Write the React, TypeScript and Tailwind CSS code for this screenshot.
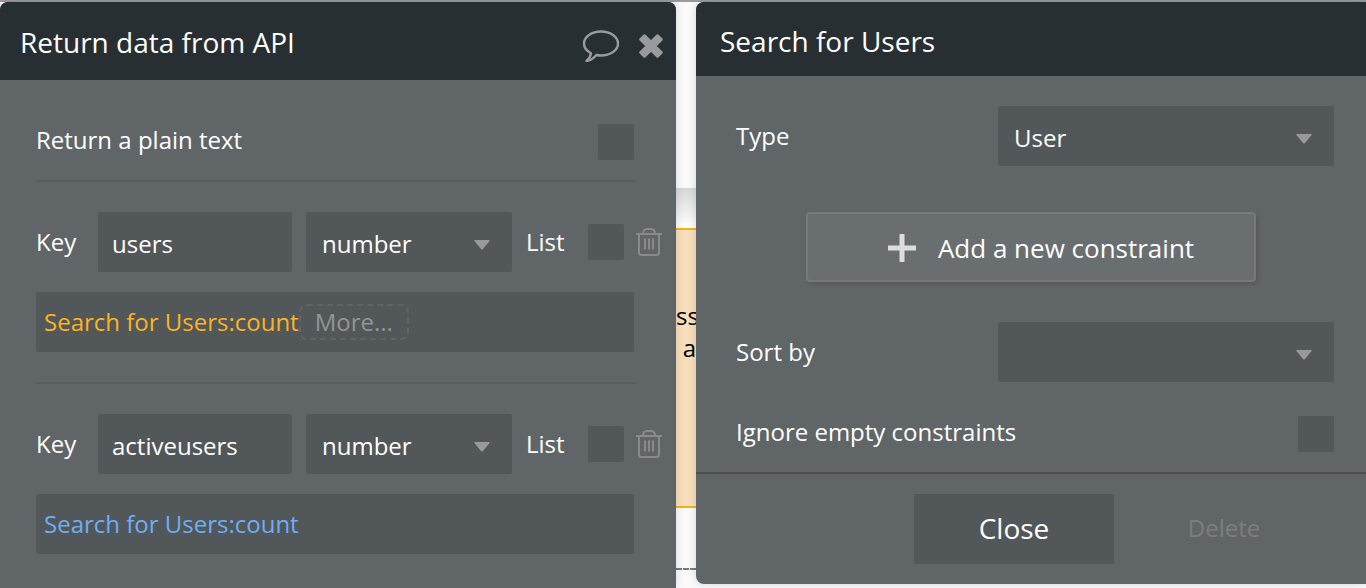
import { useState } from 'react';
import type { ReactNode } from 'react';

const entries = [
  { id: 'users', name: 'users', type: 'number', color: 'text-[#fbb321]', more: true },
  { id: 'activeusers', name: 'activeusers', type: 'number', color: 'text-[#6eaef5]', more: false },
];

function BubbleIcon() {
  return (
    <svg width="38" height="34" viewBox="0 0 38 34" fill="none" stroke="#989b9c" strokeWidth="2.4" strokeLinejoin="round">
      <path d="M19 2.500c9.400 0 17 5.300 17 12s-7.600 12-17 12c-1.600 0-3.100-.2-4.600-.5C11.500 29.500 8 31.600 4.500 32c2.400-2 4-4.600 4.500-7.800C4.800 22 2 18.500 2 14.500c0-6.700 7.600-12 17-12z" />
    </svg>
  );
}

function CrossIcon() {
  return (
    <svg width="24" height="24" viewBox="0 0 24 24" fill="#989b9c" stroke="#989b9c" strokeWidth="2.500" strokeLinejoin="round">
      <path d="M5.500 1.500l6.500 6.500 6.500-6.500 4 4-6.500 6.500 6.500 6.500-4 4-6.500-6.500-6.500 6.500-4-4L8 12 1.500 5.500z" />
    </svg>
  );
}

function TrashIcon() {
  return (
    <svg width="26" height="28" viewBox="0 0 26 28" fill="none" stroke="#878b8d" strokeWidth="2">
      <path d="M0 6h26M7 6c0-3 1.500-5 4-5h4c2.500 0 4 2 4 5M3 6v18.500c0 1.500 1 2.500 2.500 2.500h15c1.500 0 2.500-1 2.500-2.500V6" />
      <path d="M9 10.500v11M13 10.500v11M17 10.500v11" />
    </svg>
  );
}

function PlusIcon() {
  return (
    <svg width="28" height="28" viewBox="0 0 28 28" stroke="#dcdddd" strokeWidth="5">
      <path d="M14 0v28M0 14h28" />
    </svg>
  );
}

function Checkbox({ id, label }: { id: string; label?: string }) {
  return (
    <input
      id={id}
      type="checkbox"
      aria-label={label}
      className="h-9 w-9 shrink-0 appearance-none rounded-xs bg-[#525759] checked:bg-[#8a8f91]"
    />
  );
}

function Dropdown({ id, label, className, children }: { id: string; label?: string; className: string; children: ReactNode }) {
  return (
    <div className={`relative h-15 shrink-0 ${className}`}>
      <select id={id} aria-label={label} className="h-full w-full appearance-none rounded-xs bg-[#525759] pt-1 pr-12 pl-4">
        {children}
      </select>
      <svg
        className="pointer-events-none absolute top-7 right-5.5"
        width="16"
        height="10"
        viewBox="0 0 16 10"
        fill="#989b9c"
      >
        <path d="M1 0h14q1.300 0 .5 1L9 9q-1 1-2 0L.5 1Q-.3 0 1 0z" />
      </svg>
    </div>
  );
}

function ReturnDataPanel() {
  const [names, setNames] = useState<Record<string, string>>({ users: 'users', activeusers: 'activeusers' });

  return (
    <section className="z-10 rounded-t-lg bg-[#606568] shadow-[0_0_8px_rgba(0,0,0,0.15)]">
      <header className="flex items-center rounded-t-lg bg-[#282f32] pt-[19px] pr-[13px] pb-[17px] pl-5">
        <h2 className="flex-1 text-[28px] leading-[38px]">Return data from API</h2>
        <button type="button" aria-label="Comment" className="mr-[19px] pt-2">
          <BubbleIcon />
        </button>
        <button type="button" aria-label="Close panel" className="pt-2">
          <CrossIcon />
        </button>
      </header>

      <div className="pt-11 pr-10 pb-5 pl-9">
        <div className="flex justify-between pr-0.5">
          <label htmlFor="plain-text" className="leading-8">
            Return a plain text
          </label>
          <Checkbox id="plain-text" />
        </div>

        {entries.map((entry) => (
          <div key={entry.id} className="mt-5 border-t-2 border-[#585d5f] pt-[30px] pb-2.5">
            <div className="-mr-[26px] flex items-center">
              <label htmlFor={`${entry.id}-key`} className="w-[62px] shrink-0">
                Key
              </label>
              <input
                id={`${entry.id}-key`}
                type="text"
                value={names[entry.id]}
                onChange={(e) => setNames({ ...names, [entry.id]: e.target.value })}
                className="h-15 min-w-0 flex-1 rounded-xs bg-[#525759] px-3.5 pt-0.5"
              />
              <Dropdown id={`${entry.id}-type`} label="Value type" className="ml-3.5 w-[206px]">
                <option>{entry.type}</option>
                <option>text</option>
              </Dropdown>
              <label htmlFor={`${entry.id}-list`} className="ml-3.5 w-[62px] shrink-0">
                List
              </label>
              <Checkbox id={`${entry.id}-list`} />
              <button type="button" aria-label="Delete key" className="ml-3 shrink-0">
                <TrashIcon />
              </button>
            </div>

            <div className="mt-5 mr-0.5 flex h-15 items-center rounded-xs bg-[#525759] px-2">
              <button type="button" className={entry.color}>
                Search for Users:count
              </button>
              {entry.more && (
                <button
                  type="button"
                  className="rounded-lg border-2 border-dashed border-[#5f6466] px-3.5 leading-8 text-[#929596]"
                >
                  More...
                </button>
              )}
            </div>
          </div>
        ))}
      </div>
    </section>
  );
}

// Slice of the page editor that stays visible between the two panels
function Canvas() {
  return (
    <div className="overflow-hidden text-black">
      <div className="h-[186px]" />
      <div className="h-10 bg-linear-to-b from-[#d5d7d8] to-white" />
      <div className="h-[280px] border-y-2 border-[#f4b01f] bg-[#f8dfbb] pt-[70px] leading-8">
        <p>ss</p>
        <p className="text-right">a</p>
      </div>
      <div className="mt-15 border-t-2 border-dashed border-[#777b7e]" />
    </div>
  );
}

function SearchPanel() {
  return (
    <section className="z-10 self-start rounded-l-lg bg-[#606568] shadow-[0_0_8px_rgba(0,0,0,0.15)]">
      <header className="rounded-tl-lg bg-[#282f32] px-6 pt-5 pb-4">
        <h2 className="text-[28px] leading-[38px]">Search for Users</h2>
      </header>

      <div className="px-8 pt-[30px] pb-5">
        <div className="flex items-center justify-between pl-2">
          <label htmlFor="search-type">Type</label>
          <Dropdown id="search-type" className="w-[336px]">
            <option>User</option>
          </Dropdown>
        </div>

        <button
          type="button"
          className="mx-auto mt-[46px] flex h-[70px] w-[450px] items-center justify-center gap-[22px] rounded-sm border-2 border-[#75797b] bg-[#696e70] pt-0.5 pl-5 text-[26px] shadow-[2px_2px_4px_rgba(0,0,0,0.12)]"
        >
          <PlusIcon />
          Add a new constraint
        </button>

        <div className="mt-10 flex items-center justify-between pl-2">
          <label htmlFor="sort-by">Sort by</label>
          <Dropdown id="sort-by" className="w-[336px]">
            <option value="" />
            <option>Created Date</option>
          </Dropdown>
        </div>

        <div className="mt-[34px] flex justify-between pl-2">
          <label htmlFor="ignore-empty" className="leading-8">
            Ignore empty constraints
          </label>
          <Checkbox id="ignore-empty" />
        </div>
      </div>

      <footer className="flex justify-end gap-2.5 border-t-2 border-[#4c4e4f] py-5 pr-[42px]">
        <button type="button" className="h-[70px] w-[200px] bg-[#525759] pb-0.5 text-[28px]">
          Close
        </button>
        <button type="button" disabled className="h-[70px] w-[200px] pb-0.5 text-[#7b7f81]">
          Delete
        </button>
      </footer>
    </section>
  );
}

export default function App() {
  return (
    <main className="grid min-h-screen grid-cols-[minmax(0,676fr)_20px_minmax(0,670fr)] border-t-2 border-[#999b9c] bg-[#fafafa] font-['Open_Sans',sans-serif] text-2xl leading-9 text-white">
      <ReturnDataPanel />
      <Canvas />
      <SearchPanel />
    </main>
  );
}
